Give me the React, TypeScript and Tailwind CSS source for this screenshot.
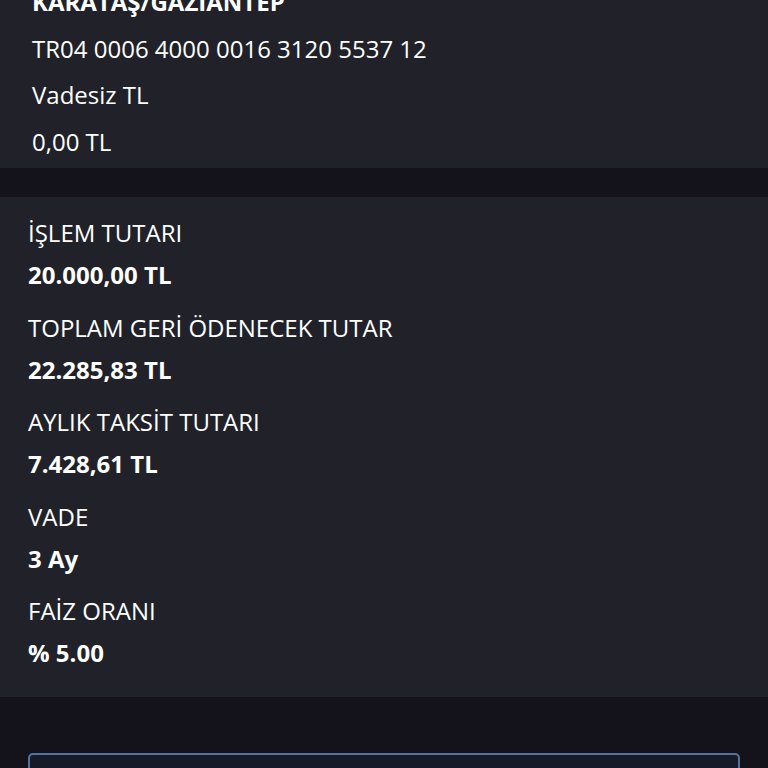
const details = [
  { label: "İŞLEM TUTARI", value: "20.000,00 TL" },
  { label: "TOPLAM GERİ ÖDENECEK TUTAR", value: "22.285,83 TL" },
  { label: "AYLIK TAKSİT TUTARI", value: "7.428,61 TL" },
  { label: "VADE", value: "3 Ay" },
  { label: "FAİZ ORANI", value: "% 5.00" },
];

export default function App() {
  return (
    <div
      className="h-[768px] w-[768px] overflow-hidden bg-[#14131b] text-white"
      style={{ fontFamily: '"Open Sans", "Noto Sans", sans-serif' }}
    >
      {/* hesap bilgisi */}
      <div className="-mt-[21px] flex h-[189px] flex-col bg-[#212229] pl-[32px] text-[24px] leading-[46.5px]">
        <div className="font-bold">KARATAŞ/GAZİANTEP</div>
        <div>TR04 0006 4000 0016 3120 5537 12</div>
        <div>Vadesiz TL</div>
        <div>0,00 TL</div>
      </div>

      <div className="h-[29px]" />

      {/* kredi özeti */}
      <div className="flex h-[500px] flex-col bg-[#212229] px-[28px] pt-[16px]">
        {details.map((d) => (
          <div key={d.label} className="flex flex-col">
            <div className="text-[24px] leading-[40px]">{d.label}</div>
            <div className="mt-[2px] text-[24px] font-bold leading-[40px]">
              {d.value}
            </div>
            <div className="h-[12.5px]" />
          </div>
        ))}
      </div>

      <div className="px-[28px] pt-[56px]">
        <div className="h-[60px] rounded-[5px] border-2 border-[#52739f] bg-[#171b28]" />
      </div>
    </div>
  );
}
